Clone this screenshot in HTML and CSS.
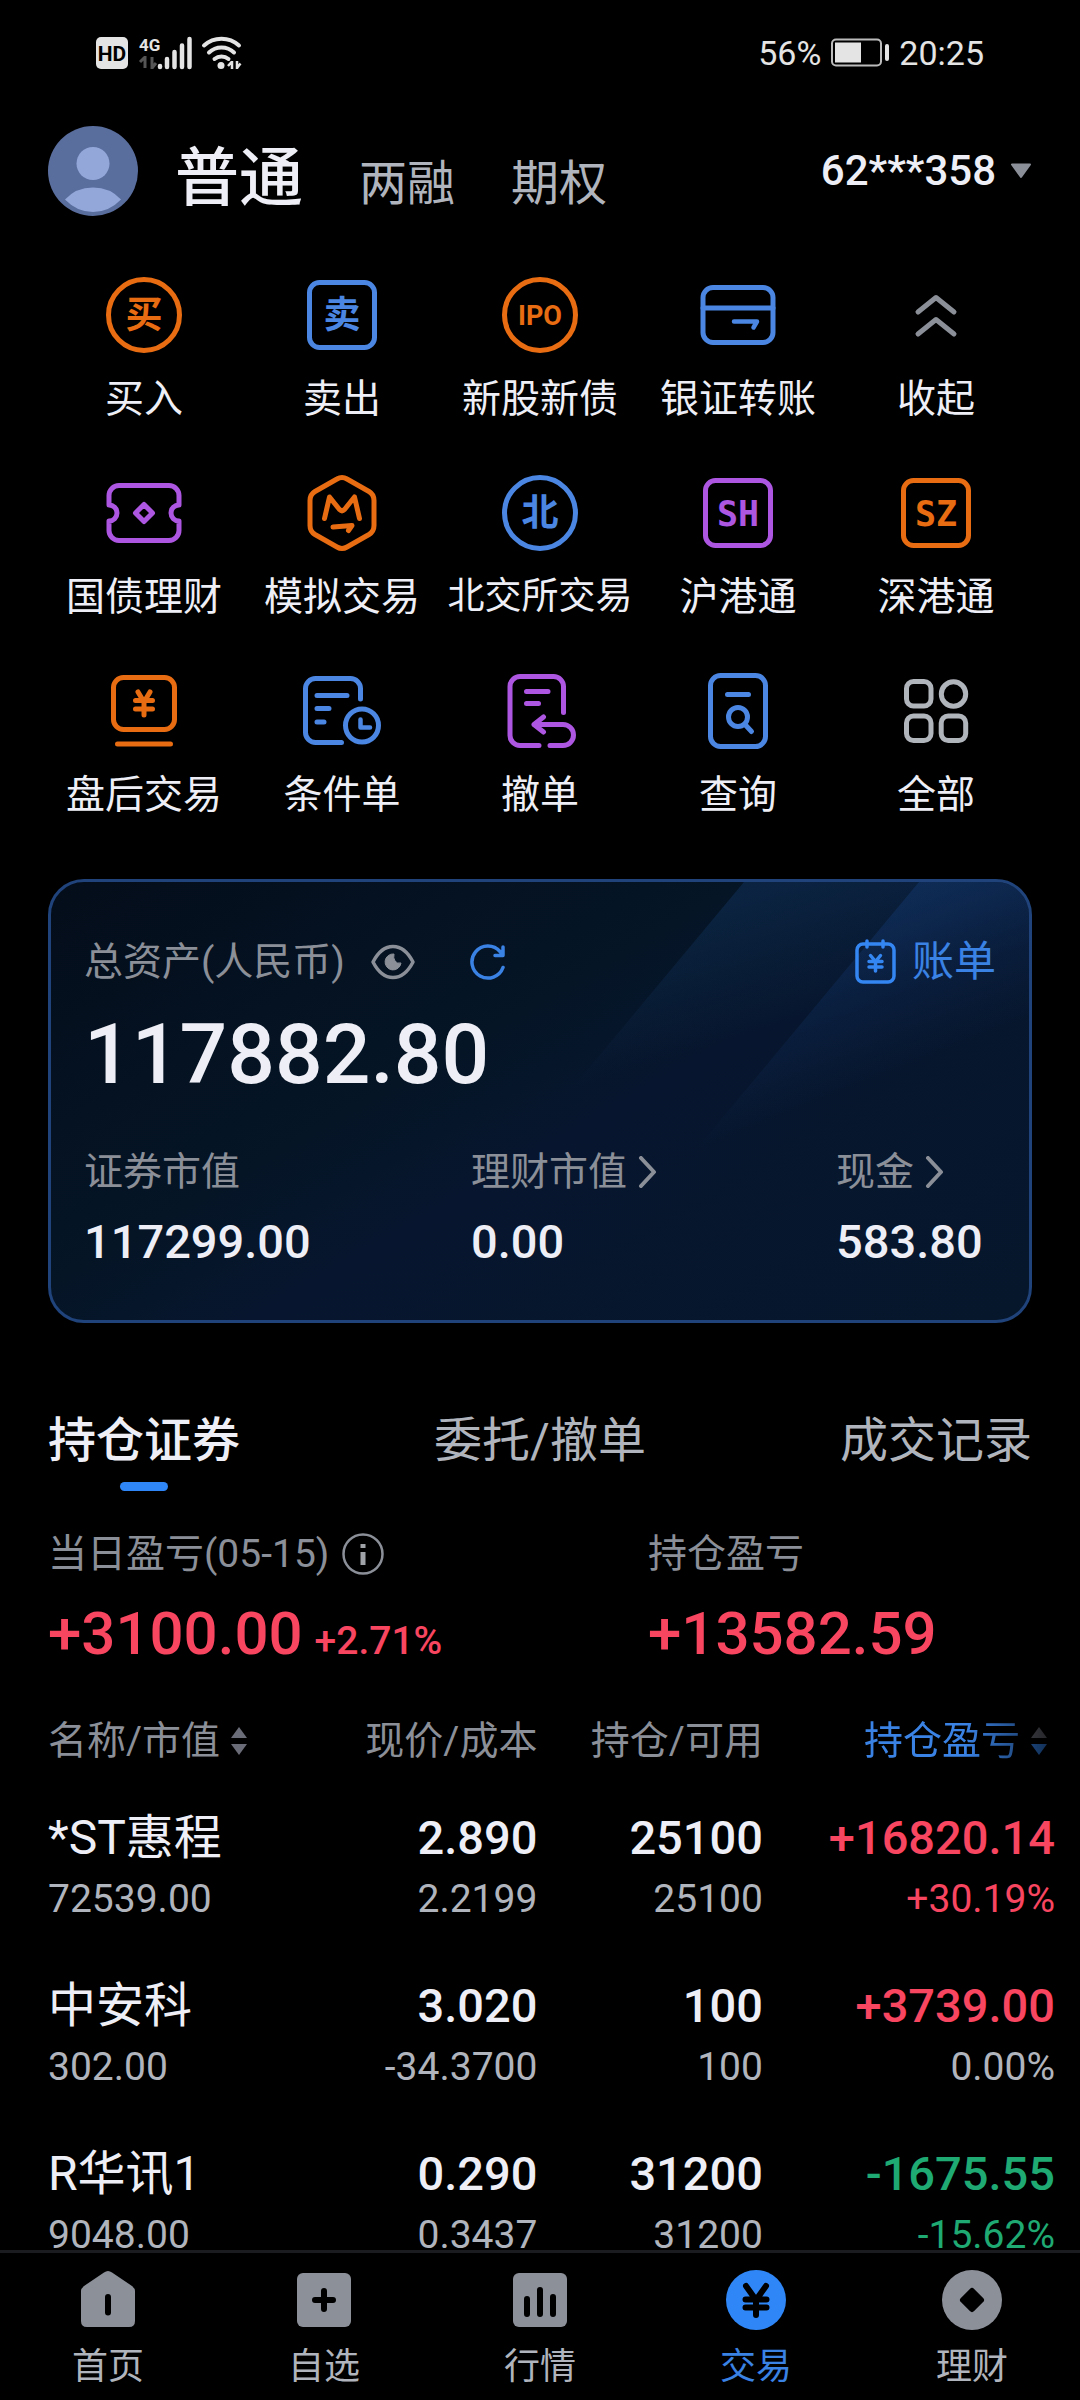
FILE: index.html
```html
<!DOCTYPE html>
<html lang="zh-CN">
<head>
    <meta charset="UTF-8">
    <meta name="viewport" content="width=device-width, initial-scale=1.0">
    <title>交易</title>
    <link rel="stylesheet" href="styles.css">
</head>
<body>
<div class="app">

    <div class="status-bar">
        <div class="status-left">
            <svg width="146" height="36" viewBox="0 0 146 36">
                <rect x="0" y="2" width="32" height="32" rx="5" fill="#e4e4e4"/>
                <text x="16" y="26" class="status-hd">HD</text>
                <text x="43" y="16" class="status-net">4G</text>
                <path d="M49 21v12M44 27l5-5M56 22v12M56 33l4-5" stroke="#555" stroke-width="3" fill="none"/>
                <path d="M64 31v1M71 24v8M78.500 17v15M86 10.500v21.500M93.500 4v28" stroke="#e4e4e4" stroke-width="4.500" stroke-linecap="round"/>
                <g fill="none" stroke="#e4e4e4" stroke-width="4" stroke-linecap="round">
                    <path d="M108 10.500a26 26 0 0 1 35 0M113 17.500a18 18 0 0 1 25 0M118.500 24a11 11 0 0 1 14 0"/>
                </g>
                <circle cx="125" cy="30.500" r="3.500" fill="#e4e4e4"/>
                <path d="M136 26v8M132 31l4-4.500M141 26v8M141 33l3.500-4.500" stroke="#e4e4e4" stroke-width="2.500" fill="none"/>
            </svg>
        </div>
        <div class="status-right">
            <span>56%</span>
            <svg width="58" height="30" viewBox="0 0 58 30">
                <rect x="1" y="1.500" width="49" height="26" rx="4" fill="none" stroke="#bbb" stroke-width="2"/>
                <rect x="4" y="4.500" width="26" height="20" fill="#e4e4e4"/>
                <rect x="54" y="6" width="4" height="17" rx="2" fill="#e4e4e4"/>
            </svg>
            <span>20:25</span>
        </div>
    </div>

    <main class="content">
        <header class="header">
            <svg class="avatar" viewBox="0 0 90 90">
                <circle cx="45" cy="45" r="45" fill="#5a6e9e"/>
                <circle cx="45" cy="37.500" r="16.500" fill="#93a8d9"/>
                <path d="M17 73.500Q28 61.500 45 61.500T73 73.500Q61 86 45 86T17 73.500z" fill="#93a8d9"/>
            </svg>
            <div class="account-types">
                <button class="account-type active">普通</button>
                <button class="account-type">两融</button>
                <button class="account-type">期权</button>
            </div>
            <button class="account-select">62***358
                <svg width="22" height="16" viewBox="0 0 22 16"><path d="M2 1.500h18L11 14z" fill="#8b8f98" stroke="#8b8f98" stroke-width="2" stroke-linejoin="round"/></svg>
            </button>
        </header>

        <!-- 功能菜单 -->
        <nav class="menu">
            <a href="#" class="menu-item">
                <svg class="icon orange" viewBox="0 0 80 80"><circle cx="40" cy="40" r="35.500"/><text x="40" y="53">买</text></svg>
                <span>买入</span>
            </a>
            <a href="#" class="menu-item">
                <svg class="icon blue" viewBox="0 0 80 80"><rect x="7.500" y="7.500" width="65" height="65" rx="10"/><text x="40" y="53">卖</text></svg>
                <span>卖出</span>
            </a>
            <a href="#" class="menu-item">
                <svg class="icon orange" viewBox="0 0 80 80"><circle cx="40" cy="40" r="35.500"/><text x="40" y="50" class="ipo">IPO</text></svg>
                <span>新股新债</span>
            </a>
            <a href="#" class="menu-item">
                <svg class="icon blue" viewBox="0 0 80 80"><rect x="5" y="12.500" width="70" height="55" rx="10"/><path d="M5 33h70"/><path d="M36 46.500h23l-3.500 6" stroke-width="4.500"/></svg>
                <span>银证转账</span>
            </a>
            <a href="#" class="menu-item">
                <svg class="icon gray" viewBox="0 0 80 80"><path d="M22 37l18-14.500L58 37M22 59l18-14.500L58 59"/></svg>
                <span>收起</span>
            </a>
            <a href="#" class="menu-item">
                <svg class="icon purple" viewBox="0 0 80 80"><path d="M5 32V22.500a10 10 0 0 1 10-10h50a10 10 0 0 1 10 10V32a8 8 0 0 0 0 16v9.500a10 10 0 0 1-10 10H15a10 10 0 0 1-10-10V48a8 8 0 0 0 0-16z"/><path d="M40 31.500l8.500 8.500-8.500 8.500-8.500-8.500z"/></svg>
                <span>国债理财</span>
            </a>
            <a href="#" class="menu-item">
                <svg class="icon orange" viewBox="0 0 80 80"><path d="M35 6q5-3 10 0l22 12.500q5 3 5 9v25q0 6-5 9L45 74q-5 3-10 0L13 61.500q-5-3-5-9v-25q0-6 5-9z"/><path d="M22.500 45.500l5-21.500 10 12.500q2.500 2.500 5 0l10-12.500 5 21.500M31 54l19-1.500-3.500 5"/></svg>
                <span>模拟交易</span>
            </a>
            <a href="#" class="menu-item">
                <svg class="icon blue" viewBox="0 0 80 80"><circle cx="40" cy="40" r="35.500"/><text x="40" y="53">北</text></svg>
                <span class="long">北交所交易</span>
            </a>
            <a href="#" class="menu-item">
                <svg class="icon purple" viewBox="0 0 80 80"><rect x="7.500" y="7.500" width="65" height="65" rx="10"/><text x="40" y="53" class="market">SH</text></svg>
                <span>沪港通</span>
            </a>
            <a href="#" class="menu-item">
                <svg class="icon orange" viewBox="0 0 80 80"><rect x="7.500" y="7.500" width="65" height="65" rx="10"/><text x="40" y="53" class="market">SZ</text></svg>
                <span>深港通</span>
            </a>
            <a href="#" class="menu-item">
                <svg class="icon orange" viewBox="0 0 80 80"><rect x="9.500" y="6.500" width="61" height="52" rx="10"/><path d="M13.500 73h53M34 21l6 10 6-10M40 30v14M31.500 29.500h17M31.500 38h17"/></svg>
                <span>盘后交易</span>
            </a>
            <a href="#" class="menu-item">
                <svg class="icon blue" viewBox="0 0 80 80"><path d="M58.500 28V17.500a10 10 0 0 0-10-10h-35a10 10 0 0 0-10 10v44a10 10 0 0 0 10 10h26M15 24.500h30M15 37.500h12M15 51h7"/><circle cx="60" cy="54.500" r="16.500"/><path d="M58.500 48.500v8H68" stroke-width="4.500"/></svg>
                <span>条件单</span>
            </a>
            <a href="#" class="menu-item">
                <svg class="icon purple" viewBox="0 0 80 80"><path d="M63.500 41.500v-26a10 10 0 0 0-10-10H20a10 10 0 0 0-10 10v49a10 10 0 0 0 10 10h19M26.500 20.500H48M26.500 32.500h12M43.500 46l-9.500 7.500 9.500 7.500M34 53.500h29a10.500 10.500 0 0 1 0 21H50"/></svg>
                <span>撤单</span>
            </a>
            <a href="#" class="menu-item">
                <svg class="icon blue" viewBox="0 0 80 80"><rect x="12.500" y="4.500" width="55" height="71" rx="10"/><circle cx="40" cy="46" r="9.500"/><path d="M29.500 23.500h21M47 53.500l6.500 7"/></svg>
                <span>查询</span>
            </a>
            <a href="#" class="menu-item">
                <svg class="icon silver" viewBox="0 0 80 80"><rect x="10.500" y="10.500" width="24.500" height="24.500" rx="7"/><circle cx="57.500" cy="23" r="12.200"/><rect x="10.500" y="45" width="24.500" height="24.500" rx="7"/><rect x="45.200" y="45" width="24.500" height="24.500" rx="7"/></svg>
                <span>全部</span>
            </a>
        </nav>

        <!-- 总资产 -->
        <section class="asset-card">
            <svg class="asset-bg" viewBox="0 0 978 438" preserveAspectRatio="xMaxYMin slice">
                <defs>
                    <linearGradient id="ray1" gradientUnits="userSpaceOnUse" x1="740" y1="0" x2="780" y2="125">
                        <stop offset="0" stop-color="#123560" stop-opacity=".45"/>
                        <stop offset="1" stop-color="#123560" stop-opacity="0"/>
                    </linearGradient>
                    <linearGradient id="ray2" gradientUnits="userSpaceOnUse" x1="880" y1="0" x2="940" y2="150">
                        <stop offset="0" stop-color="#143a74" stop-opacity=".45"/>
                        <stop offset="1" stop-color="#143a74" stop-opacity="0"/>
                    </linearGradient>
                </defs>
                <path d="M693 0h285v438H328z" fill="url(#ray1)"/>
                <path d="M868 0h110v438H503z" fill="url(#ray2)"/>
            </svg>
            <div class="asset-head">
                <span class="label">总资产(人民币)</span>
                <button class="icon-btn eye" aria-label="显示金额">
                    <svg width="44" height="36" viewBox="0 0 44 36">
                        <path d="M2 18Q10 2.500 22 2.500T42 18Q34 33.500 22 33.500T2 18z" fill="none" stroke="#8b8f98" stroke-width="3.500" stroke-linejoin="round"/>
                        <path d="M23 10a8 8 0 1 0 7 9q-4 1-6-2t-1-7z" fill="#8b8f98" stroke="#8b8f98"/>
                    </svg>
                </button>
                <button class="icon-btn refresh" aria-label="刷新">
                    <svg width="36" height="36" viewBox="0 0 36 36" fill="none" stroke="#3a82e4" stroke-width="3.500" stroke-linecap="round" stroke-linejoin="round">
                        <path d="M33 23.500A16 16 0 1 1 30 7.500l3 3.500M33 3v8.500H25"/>
                    </svg>
                </button>
                <a href="#" class="bill">
                    <svg width="42" height="46" viewBox="0 0 42 46" fill="none" stroke="#3486f2" stroke-width="3.500" stroke-linecap="round" stroke-linejoin="round">
                        <rect x="2" y="5" width="37" height="38" rx="6"/>
                        <path d="M12 2v6M28 2v6M15.500 16.500l5 6 5-6M20.500 22v10M14 22.500h13M14 28h13"/>
                    </svg>
                    账单
                </a>
            </div>
            <div class="asset-total">117882.80</div>
            <div class="asset-detail">
                <div>
                    <div class="label">证券市值</div>
                    <div class="value">117299.00</div>
                </div>
                <div>
                    <a href="#" class="label">理财市值<svg width="20" height="32" viewBox="0 0 20 32"><path d="M3 2l13 14L3 30"/></svg></a>
                    <div class="value">0.00</div>
                </div>
                <div>
                    <a href="#" class="label">现金<svg width="20" height="32" viewBox="0 0 20 32"><path d="M3 2l13 14L3 30"/></svg></a>
                    <div class="value">583.80</div>
                </div>
            </div>
        </section>

        <div class="tabs">
            <button class="tab active">持仓证券</button>
            <button class="tab">委托/撤单</button>
            <button class="tab">成交记录</button>
        </div>

        <section class="profit">
            <div>
                <div class="label">当日盈亏(05-15)
                    <svg width="42" height="42" viewBox="0 0 42 42"><circle cx="21" cy="21" r="19.500" fill="none" stroke="#8b8f98" stroke-width="2.500"/><path d="M21 19v13M21 11v4" stroke="#a0a3a8" stroke-width="5"/></svg>
                </div>
                <div class="profit-value">+3100.00<small>+2.71%</small></div>
            </div>
            <div>
                <div class="label">持仓盈亏</div>
                <div class="profit-value">+13582.59</div>
            </div>
        </section>

        <!-- 持仓列表 -->
        <table class="holdings">
            <colgroup><col class="col-name"><col class="col-price"><col class="col-qty"><col></colgroup>
            <thead>
                <tr>
                    <th><button class="sort">名称/市值<svg width="18" height="30" viewBox="0 0 18 30"><path d="M9 1l8 11H1z"/><path d="M9 29l8-11H1z"/></svg></button></th>
                    <th>现价/成本</th>
                    <th>持仓/可用</th>
                    <th><button class="sort sorted">持仓盈亏<svg width="18" height="30" viewBox="0 0 18 30"><path d="M9 1l8 11H1z"/><path class="down" d="M9 29l8-11H1z"/></svg></button></th>
                </tr>
            </thead>
            <tbody>
                <tr>
                    <td><b>*ST惠程</b><span>72539.00</span></td>
                    <td><b>2.890</b><span>2.2199</span></td>
                    <td><b>25100</b><span>25100</span></td>
                    <td><b class="up">+16820.14</b><span class="up">+30.19%</span></td>
                </tr>
                <tr>
                    <td><b>中安科</b><span>302.00</span></td>
                    <td><b>3.020</b><span>-34.3700</span></td>
                    <td><b>100</b><span>100</span></td>
                    <td><b class="up">+3739.00</b><span>0.00%</span></td>
                </tr>
                <tr>
                    <td><b>R华讯1</b><span>9048.00</span></td>
                    <td><b>0.290</b><span>0.3437</span></td>
                    <td><b>31200</b><span>31200</span></td>
                    <td><b class="fall">-1675.55</b><span class="fall">-15.62%</span></td>
                </tr>
            </tbody>
        </table>
    </main>

    <nav class="bottom-nav">
        <a href="#">
            <svg viewBox="0 0 60 60"><path d="M26 2.500q4-3 8 0L54 16q3 2.500 3 5v30q0 6-6 6H9q-6 0-6-6V21q0-2.500 3-5z"/><path class="cut" d="M30 27v15.500"/></svg>
            首页
        </a>
        <a href="#">
            <svg viewBox="0 0 60 60"><rect x="3" y="3" width="54" height="54" rx="6"/><path class="cut" d="M30 21v18M21 30h18"/></svg>
            自选
        </a>
        <a href="#">
            <svg viewBox="0 0 60 60"><rect x="3" y="3" width="54" height="54" rx="6"/><path class="cut" d="M17 29v15M30 20v24M43 27v17"/></svg>
            行情
        </a>
        <a href="#" class="active">
            <svg viewBox="0 0 60 60"><circle cx="30" cy="30" r="30"/><path class="cut" d="M20 16l10 14 10-14M30 30v15M19.500 29.500h21M19.500 37.500h21"/></svg>
            交易
        </a>
        <a href="#">
            <svg viewBox="0 0 60 60"><circle cx="30" cy="30" r="30"/><path class="diamond" d="M30 21l9 9-9 9-9-9z"/></svg>
            理财
        </a>
    </nav>

</div>
</body>
</html>
```

FILE: styles.css
```css
* {
    box-sizing: border-box;
}

body {
    margin: 0;
    background-color: #000;
    color: #eeeff6;
    font-family: Roboto, "Noto Sans CJK SC", sans-serif;
    font-size: 39px;
    line-height: 48px;
}

button {
    padding: 0;
    border: none;
    background: none;
    color: inherit;
    font: inherit;
    cursor: pointer;
}

a {
    color: inherit;
    text-decoration: none;
}

svg {
    display: block;
    flex-shrink: 0;
}

.app {
    display: flex;
    flex-direction: column;
    height: 100vh;
}

.content {
    flex: 1;
    min-height: 0;
    overflow: hidden auto;
    scrollbar-width: none;
}

/* 状态栏 */
.status-bar {
    display: flex;
    justify-content: space-between;
    align-items: center;
    height: 106px;
    padding: 0 96px;
    color: #e4e4e4;
    font-size: 34px;
}

.status-left svg {
    overflow: visible;
}

.status-right {
    display: flex;
    align-items: center;
    gap: 10px;
}

.status-hd {
    fill: #000;
    font-size: 21px;
    font-weight: 700;
    text-anchor: middle;
}

.status-net {
    fill: #e4e4e4;
    font-size: 17px;
    font-weight: 700;
}

/* 顶部账户 */
.header {
    display: flex;
    align-items: center;
    padding: 20px 48px 0;
}

.avatar {
    width: 90px;
    height: 90px;
    margin-right: 37px;
}

.account-types {
    display: flex;
    align-items: baseline;
    gap: 56px;
    padding-top: 16px;
}

.account-type {
    color: #b0b4bc;
    font-size: 48px;
    line-height: 60px;
}

.account-type.active {
    color: #eeeff6;
    font-size: 64px;
    font-weight: 500;
    line-height: 72px;
}

.account-select {
    display: flex;
    align-items: center;
    gap: 14px;
    margin-left: auto;
    font-size: 42px;
    font-weight: 500;
}

/* 功能菜单 */
.menu {
    display: grid;
    grid-template-columns: repeat(5, 1fr);
    row-gap: 50px;
    padding: 59px 45px 0;
}

.menu-item {
    display: flex;
    flex-direction: column;
    align-items: center;
    gap: 20px;
    white-space: nowrap;
}

.menu-item .long {
    font-size: 37px;
}

.icon {
    width: 80px;
    height: 80px;
    fill: none;
    stroke: currentColor;
    stroke-width: 5;
    stroke-linecap: round;
    stroke-linejoin: round;
}

.icon text {
    fill: currentColor;
    stroke: none;
    font-size: 37px;
    font-weight: 700;
    text-anchor: middle;
}

.icon .ipo {
    font-size: 27px;
}

.icon .market {
    font-family: "DejaVu Sans Mono", monospace;
    font-size: 35px;
}

.orange { color: #e86c12; }
.blue { color: #4a86e2; }
.purple { color: #ad56e2; }
.gray { color: #8b8f98; }
.silver { color: #b0b4bb; }

/* 资产卡片 */
.asset-card {
    position: relative;
    margin: 60px 48px 0;
    padding: 56px 33px 48px;
    border: 3px solid #1f437a;
    border-radius: 36px;
    background: linear-gradient(150deg, #040d1a 0%, #051526 40%, #07162e 55%, #06172c 100%);
    overflow: hidden;
}

.asset-bg {
    position: absolute;
    top: 0;
    left: 0;
    width: 100%;
    height: 100%;
}

.asset-head,
.asset-total,
.asset-detail {
    position: relative;
}

.label {
    display: flex;
    align-items: center;
    color: #8b8f98;
}

.asset-head {
    display: flex;
    align-items: center;
}

.eye {
    margin-left: 26px;
}

.refresh {
    margin-left: 55px;
}

.bill {
    display: flex;
    align-items: center;
    gap: 15px;
    margin-left: auto;
    color: #3a82e4;
    font-size: 42px;
}

.asset-total {
    margin-top: 27px;
    font-size: 84px;
    font-weight: 500;
    line-height: 84px;
}

.asset-detail {
    display: grid;
    grid-template-columns: 387fr 365fr 160fr;
    margin-top: 51px;
}

.asset-detail .label svg {
    margin-left: 11px;
    fill: none;
    stroke: #8b8f98;
    stroke-width: 4;
    stroke-linecap: round;
    stroke-linejoin: round;
}

.value {
    margin-top: 16px;
    font-size: 47px;
    font-weight: 500;
    line-height: 60px;
}

/* 标签页 */
.tabs {
    display: flex;
    justify-content: space-between;
    align-items: flex-start;
    margin-top: 88px;
    padding: 0 48px;
}

.tab {
    color: #b0b4bc;
    font-size: 48px;
    line-height: 60px;
}

.tab.active {
    color: #eeeff6;
    font-weight: 500;
}

.tab.active::after {
    content: "";
    display: block;
    width: 48px;
    height: 9px;
    margin: 11px auto 0;
    border-radius: 5px;
    background-color: #2f86f6;
}

/* 盈亏 */
.profit {
    display: grid;
    grid-template-columns: 600fr 384fr;
    margin-top: 39px;
    padding: 0 48px;
}

.profit .label {
    gap: 13px;
}

.profit-value {
    margin-top: 20px;
    color: #f84560;
    font-size: 60px;
    font-weight: 500;
    line-height: 72px;
}

.profit-value small {
    margin-left: 12px;
    font-size: 39px;
    line-height: 48px;
}

/* 持仓列表 */
.holdings {
    width: calc(100% - 73px);
    margin: 47px 25px 0 48px;
    border-collapse: collapse;
    table-layout: fixed;
    text-align: right;
    white-space: nowrap;
}

.col-name { width: 26.2%; }
.col-price { width: 22.4%; }
.col-qty { width: 22.4%; }

.holdings th {
    padding: 0;
    color: #8b8f98;
    font-weight: 400;
}

.holdings td {
    padding: 43px 0 10px;
}

.holdings th:first-child,
.holdings td:first-child {
    text-align: left;
}

.holdings b,
.holdings td span {
    display: block;
}

.holdings b {
    font-size: 47px;
    font-weight: 500;
    line-height: 60px;
}

.holdings td:first-child b {
    font-size: 48px;
    font-weight: 400;
}

.holdings td span {
    margin-top: 7px;
    color: #b0b4bc;
}

.holdings .up,
.holdings td span.up {
    color: #f84560;
}

.holdings .fall,
.holdings td span.fall {
    color: #1fa973;
}

.sort {
    display: inline-flex;
    align-items: center;
    gap: 10px;
    vertical-align: top;
}

.sort svg {
    fill: #6a6c78;
}

.sort.sorted {
    margin-right: 7px;
    color: #3a82e4;
    -webkit-mask-image: linear-gradient(90deg, #000 55%, rgba(0, 0, 0, 0.35) 100%);
    mask-image: linear-gradient(90deg, #000 55%, rgba(0, 0, 0, 0.35) 100%);
}

.sort .down {
    fill: #3486f2;
}

/* 底部导航 */
.bottom-nav {
    display: flex;
    height: 150px;
    padding-top: 17px;
    border-top: 3px solid #1b1c20;
    background-color: #000;
    color: #b0b4bc;
    font-size: 36px;
    line-height: 40px;
}

.bottom-nav a {
    display: flex;
    flex: 1;
    flex-direction: column;
    align-items: center;
    gap: 17px;
}

.bottom-nav svg {
    width: 60px;
    height: 60px;
    fill: #8c9099;
}

.bottom-nav .active {
    color: #3a82e4;
}

.bottom-nav .active svg {
    fill: #2f86f6;
}

.bottom-nav .cut {
    fill: none;
    stroke: #000;
    stroke-width: 6;
    stroke-linecap: round;
    stroke-linejoin: round;
}

.bottom-nav .diamond {
    fill: #000;
    stroke: #000;
    stroke-width: 6;
    stroke-linejoin: round;
}
```
